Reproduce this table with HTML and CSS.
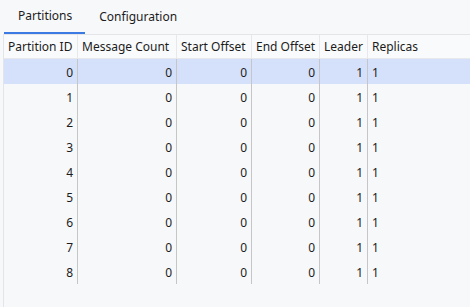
FILE: index.html
```html
<!DOCTYPE html>
<html>
<head>
<meta charset="utf-8">
<link rel="stylesheet" href="styles.css">
</head>
<body>
<div class="app">
  <div class="tabs">
    <div class="tab active">Partitions</div>
    <div class="tab">Configuration</div>
  </div>
  <div class="panel">
    <div class="grid">
      <div class="row head">
        <div class="cell">Partition ID</div>
        <div class="cell">Message Count</div>
        <div class="cell">Start Offset</div>
        <div class="cell">End Offset</div>
        <div class="cell">Leader</div>
        <div class="cell">Replicas</div>
      </div>
      <div class="row selected"><div class="cell num">0</div><div class="cell num">0</div><div class="cell num">0</div><div class="cell num">0</div><div class="cell num">1</div><div class="cell">1</div></div>
      <div class="row"><div class="cell num">1</div><div class="cell num">0</div><div class="cell num">0</div><div class="cell num">0</div><div class="cell num">1</div><div class="cell">1</div></div>
      <div class="row"><div class="cell num">2</div><div class="cell num">0</div><div class="cell num">0</div><div class="cell num">0</div><div class="cell num">1</div><div class="cell">1</div></div>
      <div class="row"><div class="cell num">3</div><div class="cell num">0</div><div class="cell num">0</div><div class="cell num">0</div><div class="cell num">1</div><div class="cell">1</div></div>
      <div class="row"><div class="cell num">4</div><div class="cell num">0</div><div class="cell num">0</div><div class="cell num">0</div><div class="cell num">1</div><div class="cell">1</div></div>
      <div class="row"><div class="cell num">5</div><div class="cell num">0</div><div class="cell num">0</div><div class="cell num">0</div><div class="cell num">1</div><div class="cell">1</div></div>
      <div class="row"><div class="cell num">6</div><div class="cell num">0</div><div class="cell num">0</div><div class="cell num">0</div><div class="cell num">1</div><div class="cell">1</div></div>
      <div class="row"><div class="cell num">7</div><div class="cell num">0</div><div class="cell num">0</div><div class="cell num">0</div><div class="cell num">1</div><div class="cell">1</div></div>
      <div class="row"><div class="cell num">8</div><div class="cell num">0</div><div class="cell num">0</div><div class="cell num">0</div><div class="cell num">1</div><div class="cell">1</div></div>
    </div>
  </div>
</div>
</body>
</html>
```

FILE: styles.css
```css
html, body {
  margin: 0;
  padding: 0;
  background: #f7f8fa;
}
body {
  font-family: "Noto Sans", "Open Sans", sans-serif;
  font-size: 12px;
  color: #1c1c1c;
  width: 470px;
  height: 307px;
  overflow: hidden;
}
.app {
  display: flex;
  flex-direction: column;
  height: 307px;
  padding-left: 3px;
}
.tabs {
  display: flex;
  height: 34px;
  padding-left: 1px;
}
.tab {
  box-sizing: border-box;
  height: 34px;
  padding: 0 13px 0 14px;
  line-height: 33px;
  font-size: 12px;
}
.tab.active {
  border-bottom: 2px solid #3b79e3;
  line-height: 32px;
}
.panel {
  flex: 1;
  border-left: 1px solid #e3e5e9;
  border-top: 1px solid #e3e5e9;
}
.row {
  display: grid;
  grid-template-columns: 74px 99px 75px 68px 48px 1fr;
  height: 25px;
}
.row.head {
  height: 23px;
  border-bottom: 1px solid #e6e8eb;
  background: #f9fafb;
}
.cell {
  box-sizing: border-box;
  padding: 1px 4px 0;
  line-height: 25px;
  border-right: 1px solid #c6c6c6;
  white-space: nowrap;
  overflow: hidden;
}
.cell:last-child {
  border-right: none;
}
.head .cell {
  padding-top: 0;
  line-height: 23px;
  border-right-color: #e6e8eb;
}
.cell.num {
  text-align: right;
}
.row.selected {
  background: #d5e1fa;
}
```
